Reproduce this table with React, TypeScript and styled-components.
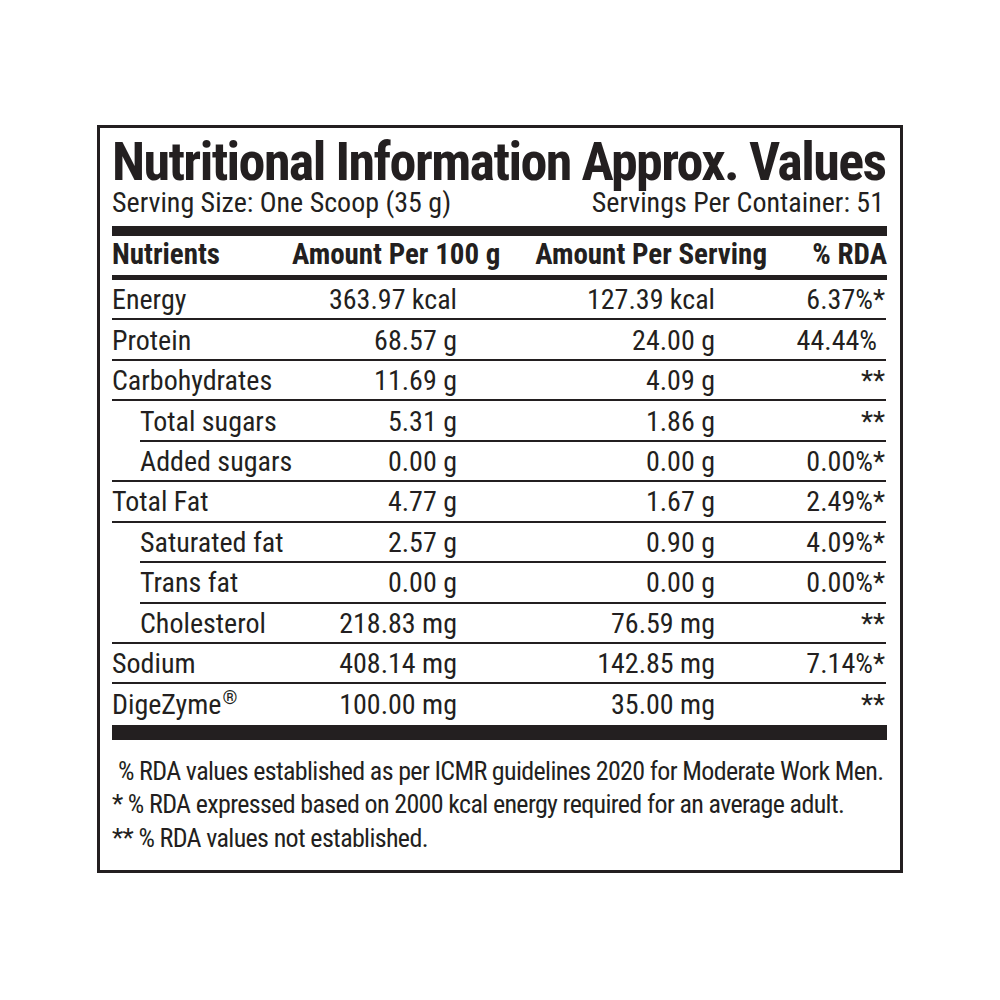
import React from "react";
import styled, { createGlobalStyle } from "styled-components";

const FONT = `"Roboto Condensed", "Open Sans", "DejaVu Sans Condensed", sans-serif`;
const INK = "#231f20";

const Global = createGlobalStyle`
  html, body { margin: 0; padding: 0; background: #fff; }
  body { font-family: ${FONT}; color: ${INK}; }
`;

const Label = styled.div`
  box-sizing: border-box;
  margin: 125px 0 0 97px;
  width: 806px;
  height: 748px;
  border: 3px solid ${INK};
  padding: 0 13px 0 12px;
  font-family: ${FONT};
`;

const Title = styled.div`
  font-size: 54px;
  font-weight: 700;
  line-height: 50px;
  letter-spacing: -1.6px;
  padding-top: 9px;
  white-space: nowrap;
`;

const ServingRow = styled.div`
  box-sizing: border-box;
  display: flex;
  justify-content: space-between;
  font-size: 28px;
  line-height: 26px;
  height: 39px;
  padding: 3px 3px 0 0;
`;

const Bar = styled.div<{ $h: number }>`
  height: ${(p) => p.$h}px;
  background: ${INK};
`;

const HeaderRow = styled.div`
  display: grid;
  grid-template-columns: 180px 208px 267px 1fr;
  height: 39px;
  align-items: center;
  font-size: 29px;
  font-weight: 700;
  line-height: 1;
  padding-bottom: 2px;
  box-sizing: border-box;
`;

const HCell = styled.div<{ $right?: boolean }>`
  text-align: ${(p) => (p.$right ? "right" : "left")};
  white-space: nowrap;
`;

const Body = styled.div`
  display: flex;
  flex-direction: column;
`;

const Row = styled.div<{ $line: "full" | "inset" | "none" }>`
  position: relative;
  box-sizing: border-box;
  height: 40.45px;
  display: grid;
  grid-template-columns: 180px 165px 258px 1fr;
  align-items: center;
  font-size: 28px;
  line-height: 1;
  &::after {
    content: "";
    display: ${(p) => (p.$line === "none" ? "none" : "block")};
    position: absolute;
    left: ${(p) => (p.$line === "inset" ? "28px" : "0")};
    right: 1px;
    bottom: 0;
    height: 2px;
    background: ${INK};
  }
`;

const Name = styled.div<{ $sub?: boolean }>`
  padding-left: ${(p) => (p.$sub ? "28px" : "0")};
  white-space: nowrap;
`;

const Val = styled.div`
  text-align: right;
  white-space: nowrap;
`;

const Rda = styled.div<{ $pad?: number }>`
  text-align: right;
  white-space: nowrap;
  padding-right: ${(p) => p.$pad ?? 2}px;
`;

const Sup = styled.sup`
  font-size: 0.68em;
  vertical-align: 0.5em;
  line-height: 0;
  margin-left: 1px;
`;

const Notes = styled.div`
  padding-top: 15px;
  font-size: 26px;
  line-height: 33.5px;
  letter-spacing: -0.65px;
`;

const NoteLine = styled.div<{ $indent?: number }>`
  padding-left: ${(p) => p.$indent ?? 0}px;
  white-space: nowrap;
`;

type R = { name: React.ReactNode; a: string; b: string; rda: string; pad?: number; sub?: boolean };

const rows: R[] = [
  { name: "Energy", a: "363.97 kcal", b: "127.39 kcal", rda: "6.37%*" },
  { name: "Protein", a: "68.57 g", b: "24.00 g", rda: "44.44%", pad: 10 },
  { name: "Carbohydrates", a: "11.69 g", b: "4.09 g", rda: "**" },
  { name: "Total sugars", a: "5.31 g", b: "1.86 g", rda: "**", sub: true },
  { name: "Added sugars", a: "0.00 g", b: "0.00 g", rda: "0.00%*", sub: true },
  { name: "Total Fat", a: "4.77 g", b: "1.67 g", rda: "2.49%*" },
  { name: "Saturated fat", a: "2.57 g", b: "0.90 g", rda: "4.09%*", sub: true },
  { name: "Trans fat", a: "0.00 g", b: "0.00 g", rda: "0.00%*", sub: true },
  { name: "Cholesterol", a: "218.83 mg", b: "76.59 mg", rda: "**", sub: true },
  { name: "Sodium", a: "408.14 mg", b: "142.85 mg", rda: "7.14%*" },
  { name: <>DigeZyme<Sup>®</Sup></>, a: "100.00 mg", b: "35.00 mg", rda: "**" },
];

export default function App() {
  return (
    <>
      <Global />
      <Label>
        <Title>Nutritional Information Approx. Values</Title>
        <ServingRow>
          <span>Serving Size: One Scoop (35 g)</span>
          <span>Servings Per Container: 51</span>
        </ServingRow>
        <Bar $h={10} />
        <HeaderRow>
          <HCell>Nutrients</HCell>
          <HCell $right>Amount Per 100 g</HCell>
          <HCell $right>Amount Per Serving</HCell>
          <HCell $right>% RDA</HCell>
        </HeaderRow>
        <Bar $h={5} />
        <Body>
          {rows.map((r, i) => {
            const next = rows[i + 1];
            const line = !next ? "none" : r.sub && next.sub ? "inset" : "full";
            return (
              <Row key={i} $line={line}>
                <Name $sub={r.sub}>{r.name}</Name>
                <Val>{r.a}</Val>
                <Val>{r.b}</Val>
                <Rda $pad={r.pad}>{r.rda}</Rda>
              </Row>
            );
          })}
        </Body>
        <Bar $h={15} />
        <Notes>
          <NoteLine $indent={6}>% RDA values established as per ICMR guidelines 2020 for Moderate Work Men.</NoteLine>
          <NoteLine>* % RDA expressed based on 2000 kcal energy required for an average adult.</NoteLine>
          <NoteLine>** % RDA values not established.</NoteLine>
        </Notes>
      </Label>
    </>
  );
}
